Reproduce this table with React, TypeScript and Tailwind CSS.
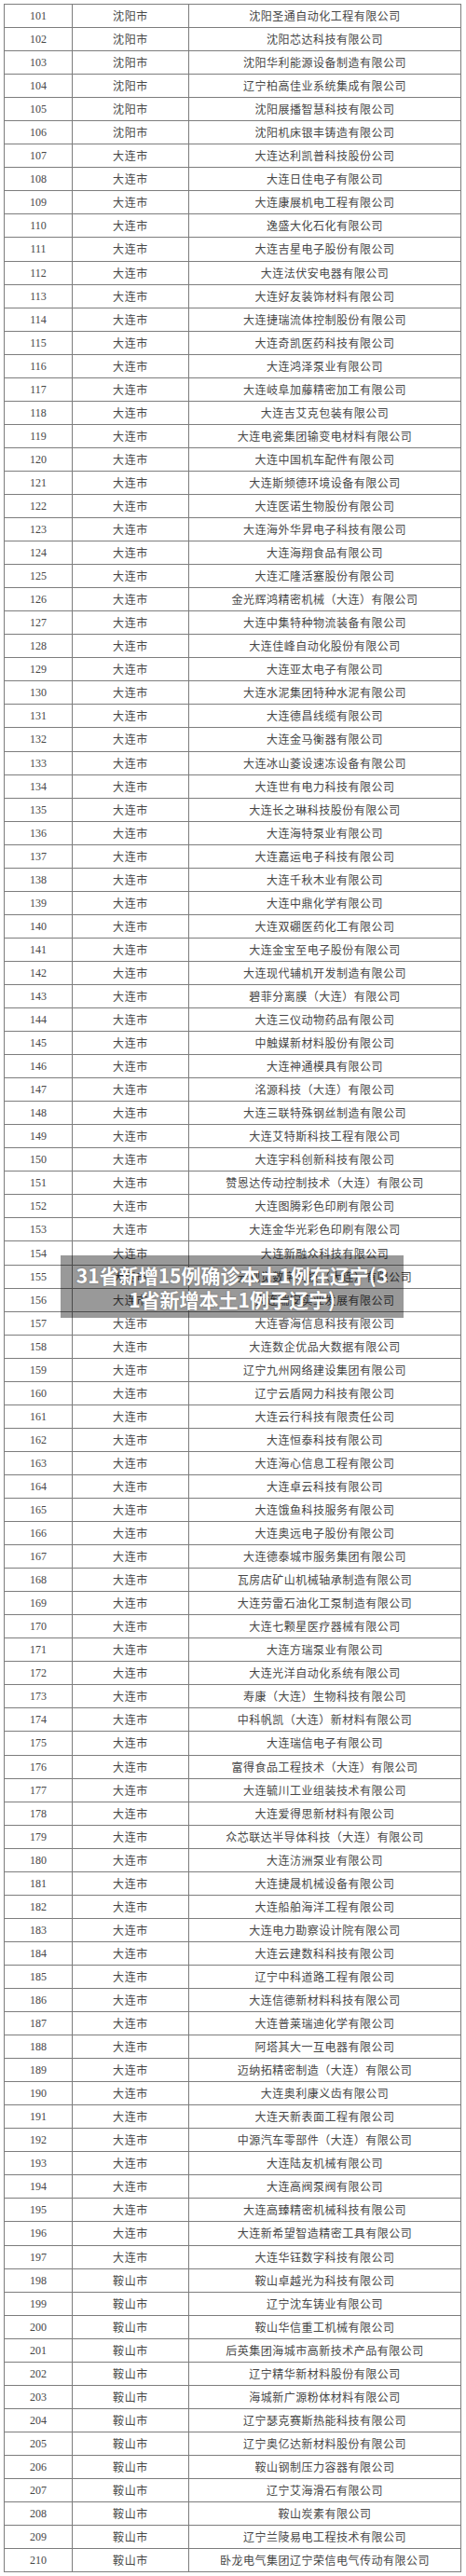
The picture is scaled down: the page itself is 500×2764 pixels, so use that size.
import React from "react";

const rows: [string, string][] = [
  ["沈阳市", "沈阳圣通自动化工程有限公司"],
  ["沈阳市", "沈阳芯达科技有限公司"],
  ["沈阳市", "沈阳华利能源设备制造有限公司"],
  ["沈阳市", "辽宁柏高佳业系统集成有限公司"],
  ["沈阳市", "沈阳展播智慧科技有限公司"],
  ["沈阳市", "沈阳机床银丰铸造有限公司"],
  ["大连市", "大连达利凯普科技股份公司"],
  ["大连市", "大连日佳电子有限公司"],
  ["大连市", "大连康展机电工程有限公司"],
  ["大连市", "逸盛大化石化有限公司"],
  ["大连市", "大连吉星电子股份有限公司"],
  ["大连市", "大连法伏安电器有限公司"],
  ["大连市", "大连好友装饰材料有限公司"],
  ["大连市", "大连捷瑞流体控制股份有限公司"],
  ["大连市", "大连奇凯医药科技有限公司"],
  ["大连市", "大连鸿泽泵业有限公司"],
  ["大连市", "大连岐阜加藤精密加工有限公司"],
  ["大连市", "大连吉艾克包装有限公司"],
  ["大连市", "大连电瓷集团输变电材料有限公司"],
  ["大连市", "大连中国机车配件有限公司"],
  ["大连市", "大连斯频德环境设备有限公司"],
  ["大连市", "大连医诺生物股份有限公司"],
  ["大连市", "大连海外华昇电子科技有限公司"],
  ["大连市", "大连海翔食品有限公司"],
  ["大连市", "大连汇隆活塞股份有限公司"],
  ["大连市", "金光辉鸿精密机械（大连）有限公司"],
  ["大连市", "大连中集特种物流装备有限公司"],
  ["大连市", "大连佳峰自动化股份有限公司"],
  ["大连市", "大连亚太电子有限公司"],
  ["大连市", "大连水泥集团特种水泥有限公司"],
  ["大连市", "大连德昌线缆有限公司"],
  ["大连市", "大连金马衡器有限公司"],
  ["大连市", "大连冰山菱设速冻设备有限公司"],
  ["大连市", "大连世有电力科技有限公司"],
  ["大连市", "大连长之琳科技股份有限公司"],
  ["大连市", "大连海特泵业有限公司"],
  ["大连市", "大连嘉运电子科技有限公司"],
  ["大连市", "大连千秋木业有限公司"],
  ["大连市", "大连中鼎化学有限公司"],
  ["大连市", "大连双硼医药化工有限公司"],
  ["大连市", "大连金宝至电子股份有限公司"],
  ["大连市", "大连现代辅机开发制造有限公司"],
  ["大连市", "碧菲分离膜（大连）有限公司"],
  ["大连市", "大连三仪动物药品有限公司"],
  ["大连市", "中触媒新材料股份有限公司"],
  ["大连市", "大连神通模具有限公司"],
  ["大连市", "洺源科技（大连）有限公司"],
  ["大连市", "大连三联特殊钢丝制造有限公司"],
  ["大连市", "大连艾特斯科技工程有限公司"],
  ["大连市", "大连宇科创新科技有限公司"],
  ["大连市", "赞恩达传动控制技术（大连）有限公司"],
  ["大连市", "大连图腾彩色印刷有限公司"],
  ["大连市", "大连金华光彩色印刷有限公司"],
  ["大连市", "大连新融众科技有限公司"],
  ["大连市", "元视觉数字科技（大连）有限公司"],
  ["大连市", "大连瑞安实业发展有限公司"],
  ["大连市", "大连睿海信息科技有限公司"],
  ["大连市", "大连数企优品大数据有限公司"],
  ["大连市", "辽宁九州网络建设集团有限公司"],
  ["大连市", "辽宁云盾网力科技有限公司"],
  ["大连市", "大连云行科技有限责任公司"],
  ["大连市", "大连恒泰科技有限公司"],
  ["大连市", "大连海心信息工程有限公司"],
  ["大连市", "大连卓云科技有限公司"],
  ["大连市", "大连饿鱼科技服务有限公司"],
  ["大连市", "大连奥远电子股份有限公司"],
  ["大连市", "大连德泰城市服务集团有限公司"],
  ["大连市", "瓦房店矿山机械轴承制造有限公司"],
  ["大连市", "大连劳雷石油化工泵制造有限公司"],
  ["大连市", "大连七颗星医疗器械有限公司"],
  ["大连市", "大连方瑞泵业有限公司"],
  ["大连市", "大连光洋自动化系统有限公司"],
  ["大连市", "寿康（大连）生物科技有限公司"],
  ["大连市", "中科帆凯（大连）新材料有限公司"],
  ["大连市", "大连瑞信电子有限公司"],
  ["大连市", "富得食品工程技术（大连）有限公司"],
  ["大连市", "大连毓川工业组装技术有限公司"],
  ["大连市", "大连爱得思新材料有限公司"],
  ["大连市", "众芯联达半导体科技（大连）有限公司"],
  ["大连市", "大连汸洲泵业有限公司"],
  ["大连市", "大连捷晟机械设备有限公司"],
  ["大连市", "大连船舶海洋工程有限公司"],
  ["大连市", "大连电力勘察设计院有限公司"],
  ["大连市", "大连云建数科科技有限公司"],
  ["大连市", "辽宁中科道路工程有限公司"],
  ["大连市", "大连信德新材料科技有限公司"],
  ["大连市", "大连普莱瑞迪化学有限公司"],
  ["大连市", "阿塔其大一互电器有限公司"],
  ["大连市", "迈纳拓精密制造（大连）有限公司"],
  ["大连市", "大连奥利康义齿有限公司"],
  ["大连市", "大连天新表面工程有限公司"],
  ["大连市", "中源汽车零部件（大连）有限公司"],
  ["大连市", "大连陆友机械有限公司"],
  ["大连市", "大连高阀泵阀有限公司"],
  ["大连市", "大连高臻精密机械科技有限公司"],
  ["大连市", "大连新希望智造精密工具有限公司"],
  ["大连市", "大连华钰数字科技有限公司"],
  ["鞍山市", "鞍山卓越光为科技有限公司"],
  ["鞍山市", "辽宁沈车铸业有限公司"],
  ["鞍山市", "鞍山华信重工机械有限公司"],
  ["鞍山市", "后英集团海城市高新技术产品有限公司"],
  ["鞍山市", "辽宁精华新材料股份有限公司"],
  ["鞍山市", "海城新广源粉体材料有限公司"],
  ["鞍山市", "辽宁瑟克赛斯热能科技有限公司"],
  ["鞍山市", "辽宁奥亿达新材料股份有限公司"],
  ["鞍山市", "鞍山钢制压力容器有限公司"],
  ["鞍山市", "辽宁艾海滑石有限公司"],
  ["鞍山市", "鞍山炭素有限公司"],
  ["鞍山市", "辽宁兰陵易电工程技术有限公司"],
  ["鞍山市", "卧龙电气集团辽宁荣信电气传动有限公司"],
];

const cjk = { fontFamily: '"Noto Sans CJK SC", "Noto Sans", sans-serif' };
const num = { fontFamily: '"Liberation Serif", "Noto Sans CJK SC", serif' };

export default function App() {
  return (
    <div className="relative w-[500px] h-[2764px] bg-white p-[4px]">
      <div className="w-[491px] border-l border-r border-t border-[#7d7d7d]">
        {rows.map(([city, name], i) => (
          <div
            key={i}
            className="grid grid-cols-[73px_125px_1fr] h-[25.05px] border-b border-[#7d7d7d] text-[#474747] leading-[14px]"
          >
            <div
              className="flex items-center justify-center border-r border-[#7d7d7d] text-[12px]"
              style={num}
            >
              {101 + i}
            </div>
            <div
              className="flex items-center justify-center border-r border-[#7d7d7d] text-[12px] tracking-[0.6px]"
              style={cjk}
            >
              {city}
            </div>
            <div
              className="flex items-center justify-center text-[12px] tracking-[0.5px] whitespace-nowrap"
              style={cjk}
            >
              {name}
            </div>
          </div>
        ))}
      </div>
      <div className="absolute left-[65px] top-[1347px] w-[368px] h-[67px] bg-black/40 flex flex-col items-center justify-center">
        <p
          className="text-white font-bold text-[21px] leading-[26px] text-center whitespace-nowrap [text-shadow:0_0_2px_rgba(0,0,0,0.35)]"
          style={cjk}
        >
          31省新增15例确诊本土1例在辽宁(3
          <br />
          1省新增本土1例子辽宁)
        </p>
      </div>
    </div>
  );
}
